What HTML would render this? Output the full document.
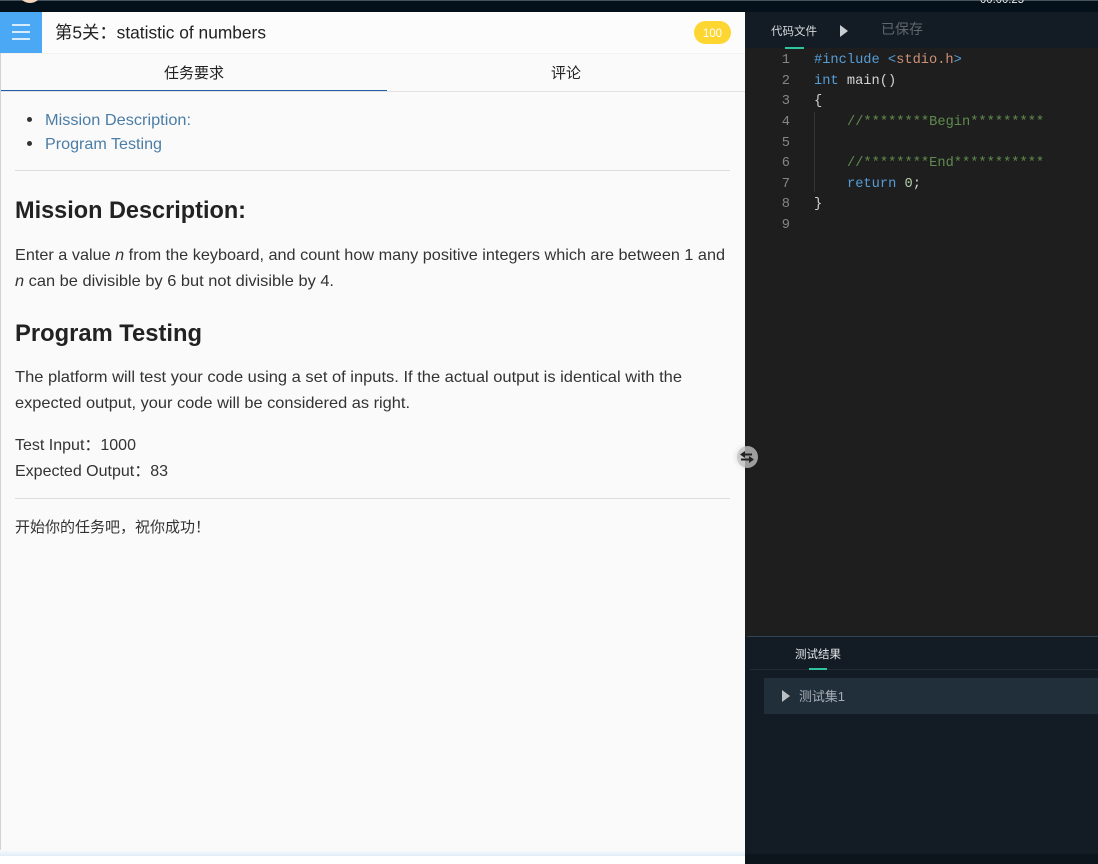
<!DOCTYPE html>
<html lang="zh"><head><meta charset="utf-8"><title>第5关：statistic of numbers</title>
<style>
html,body{margin:0;padding:0;width:1098px;height:864px;overflow:hidden;background:#fff}
div{position:absolute}
svg{position:absolute;left:0;top:0}
text{font-family:"Liberation Sans","Noto Sans CJK SC",sans-serif;white-space:pre}
.m text{font-family:"Liberation Mono",monospace;font-size:13.7px}
</style></head><body>
<div style="left:0;top:0;width:1098px;height:12px;background:#04101a"></div>
<div style="left:0;top:0;width:1098px;height:1px;background:#48525a"></div>
<div style="left:18px;top:-11px;width:24px;height:14px;border-radius:0 0 12px 12px;background:#f3d3bb"></div>

<div style="left:0;top:12px;width:745px;height:840px;background:#fafafa"></div>
<div style="left:0;top:12px;width:745px;height:41px;background:#fcfcfc;border-bottom:1px solid #f2f2f2"></div>
<div style="left:0;top:12px;width:42px;height:41px;background:#4aa8f5"></div>
<div style="left:12px;top:24px;width:18px;height:2px;background:#d6ebfd"></div>
<div style="left:12px;top:31px;width:18px;height:2px;background:#d6ebfd"></div>
<div style="left:12px;top:38px;width:18px;height:2px;background:#d6ebfd"></div>
<div style="left:694px;top:21px;width:37px;height:23px;border-radius:12px;background:#fdd632"></div>
<div style="left:0;top:91px;width:745px;height:1px;background:#e2e2e2"></div>
<div style="left:0;top:90px;width:387px;height:1px;background:#1f5fa8"></div>
<div style="left:15px;top:170px;width:715px;height:1px;background:#dcdcdc"></div>
<div style="left:15px;top:498px;width:715px;height:1px;background:#dcdcdc"></div>
<div style="left:0;top:53px;width:1px;height:799px;background:#cfd3d7"></div>
<div style="left:0;top:850px;width:745px;height:6px;background:linear-gradient(#fafafa,#f0f5fa 40%,#dfecf8)"></div>
<div style="left:0;top:856px;width:745px;height:8px;background:#fff"></div>
<div style="left:27px;top:117px;width:5px;height:5px;border-radius:50%;background:#333"></div>
<div style="left:27px;top:141px;width:5px;height:5px;border-radius:50%;background:#333"></div>

<div style="left:745px;top:12px;width:353px;height:852px;background:#131c24"></div>
<div style="left:745px;top:48px;width:353px;height:588px;background:#1e1e1e"></div>
<div style="left:785px;top:47px;width:19px;height:2px;background:#2fc4a0"></div>
<div style="left:814px;top:112px;width:1px;height:80px;background:#363636"></div>
<div style="left:747px;top:636px;width:351px;height:1px;background:#2f4656"></div>
<div style="left:750px;top:669px;width:348px;height:1px;background:#1f2c36"></div>
<div style="left:809px;top:668px;width:18px;height:2px;background:#2fc4a0"></div>
<div style="left:764px;top:678px;width:334px;height:36px;background:#212f3b"></div>
<div style="left:745px;top:854px;width:353px;height:10px;background:#0c151c"></div>
<div style="left:737px;top:446px;width:21px;height:22px;border-radius:50%;background:rgba(190,190,190,.8);box-shadow:-2px 0 5px rgba(0,0,0,.08)"></div>

<svg width="1098" height="864" viewBox="0 0 1098 864">
<polygon points="840,25 840,37 848,31" fill="#c9ced2"/>
<polygon points="782,690 782,702 790,696" fill="#b9c0c5"/>
<g fill="#222">
<rect x="744" y="453.500" width="8" height="2"/>
<polygon points="745,451 745,458 740,454.500"/>
<rect x="741" y="458.500" width="8" height="2"/>
<polygon points="749,456 749,463 754,459.500"/>
</g>
<text x="980" y="3" font-size="12" fill="#e8e8e8" textLength="44" lengthAdjust="spacingAndGlyphs">00:00:25</text>

<text x="55" y="38.500" font-size="17.500" fill="#222" textLength="211" lengthAdjust="spacingAndGlyphs">第5关：statistic of numbers</text>
<text x="703" y="37" font-size="11.500" fill="#fff" textLength="19" lengthAdjust="spacingAndGlyphs">100</text>
<text x="164" y="78" font-size="15" fill="#222">任务要求</text>
<text x="551" y="78" font-size="15" fill="#222">评论</text>

<text x="45" y="125" font-size="16" fill="#4b7da6" textLength="146" lengthAdjust="spacingAndGlyphs">Mission Description:</text>
<text x="45" y="149" font-size="16" fill="#4b7da6" textLength="117" lengthAdjust="spacingAndGlyphs">Program Testing</text>

<text x="15" y="218" font-size="24" font-weight="700" fill="#222" textLength="231" lengthAdjust="spacingAndGlyphs">Mission Description:</text>
<text x="15" y="260" font-size="16" fill="#333" textLength="710" lengthAdjust="spacingAndGlyphs">Enter a value <tspan font-style="italic">n</tspan> from the keyboard, and count how many positive integers which are between 1 and</text>
<text x="15" y="286" font-size="16" fill="#333" textLength="319" lengthAdjust="spacingAndGlyphs"><tspan font-style="italic">n</tspan> can be divisible by 6 but not divisible by 4.</text>
<text x="15" y="341" font-size="24" font-weight="700" fill="#222" textLength="187" lengthAdjust="spacingAndGlyphs">Program Testing</text>
<text x="15" y="382" font-size="16" fill="#333" textLength="667" lengthAdjust="spacingAndGlyphs">The platform will test your code using a set of inputs. If the actual output is identical with the</text>
<text x="15" y="408" font-size="16" fill="#333" textLength="395" lengthAdjust="spacingAndGlyphs">expected output, your code will be considered as right.</text>
<text x="15" y="450" font-size="16" fill="#333" textLength="121" lengthAdjust="spacingAndGlyphs">Test Input：1000</text>
<text x="15" y="476" font-size="16" fill="#333" textLength="153" lengthAdjust="spacingAndGlyphs">Expected Output：83</text>
<text x="15" y="532" font-size="15" fill="#333">开始你的任务吧，祝你成功！</text>

<text x="771" y="35" font-size="11.500" fill="#d5d9dc">代码文件</text>
<text x="881" y="34" font-size="14" fill="#5f676d">已保存</text>
<text x="795" y="658" font-size="11.500" fill="#e4e7e9">测试结果</text>
<text x="799" y="701" font-size="13" fill="#a6aeb4" textLength="46" lengthAdjust="spacingAndGlyphs">测试集1</text>

<g class="m">
<g fill="#858585" text-anchor="end">
<text x="790" y="63">1</text><text x="790" y="84">2</text><text x="790" y="104">3</text><text x="790" y="125">4</text><text x="790" y="146">5</text><text x="790" y="166">6</text><text x="790" y="187">7</text><text x="790" y="207">8</text><text x="790" y="228">9</text>
</g>
<text x="814" y="63" fill="#569cd6">#include &lt;<tspan fill="#ce9178">stdio.h</tspan>&gt;</text>
<text x="814" y="84" fill="#d4d4d4"><tspan fill="#569cd6">int</tspan> main()</text>
<text x="814" y="104" fill="#d4d4d4">{</text>
<text x="847" y="125" fill="#608b4e">//********Begin*********</text>
<text x="847" y="166" fill="#608b4e">//********End***********</text>
<text x="847" y="187" fill="#d4d4d4"><tspan fill="#569cd6">return</tspan> <tspan fill="#b5cea8">0</tspan>;</text>
<text x="814" y="207" fill="#d4d4d4">}</text>
</g>
</svg>
</body></html>
